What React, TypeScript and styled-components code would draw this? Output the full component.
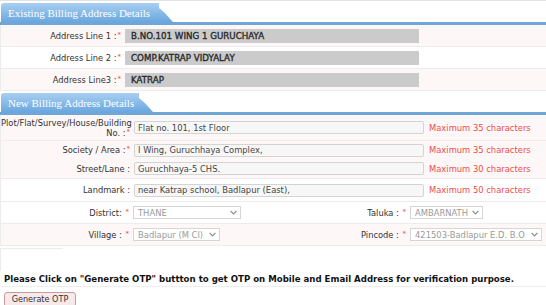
import * as React from "react";
import styled, {createGlobalStyle} from "styled-components";

const GlobalStyle = createGlobalStyle`
  html, body {
    margin: 0;
    padding: 0;
    background: #FFFFFF;
  }
  body {
    font-family: "DejaVu Sans", Verdana, sans-serif;
    color: #333;
  }
`;

const Page = styled.div`
  width: 546px;
  height: 305px;
  overflow: hidden;
  border-top: 1px solid #e2e2e2;
`;

const SectionHead = styled.div`
  margin-top: 2px;
  height: 19px;
  border-bottom: 3px solid #6ea6da;
  display: flex;
  align-items: flex-end;
`;

const Tab = styled.div<{ $width: number }>`
  position: relative;
  width: ${p => p.$width}px;
  height: 19px;
  margin-left: 1px;
  padding-left: 7px;
  box-sizing: border-box;
  display: flex;
  align-items: center;
  font-family: "Liberation Serif", "Times New Roman", serif;
  font-size: 11px;
  color: #ffffff;
  white-space: nowrap;
  background: linear-gradient(#a9cff1, #6aa7de);
  border-top-left-radius: 3px;

  &::after {
    content: "";
    position: absolute;
    top: 0;
    right: -14px;
    width: 26px;
    height: 19px;
    background: linear-gradient(#a9cff1, #6aa7de);
    border-top-right-radius: 10px;
    transform: skewX(42deg);
    transform-origin: bottom left;
  }

  span {
    position: relative;
    z-index: 1;
  }
`;

const Row = styled.div<{ $pink?: boolean; $labelWidth: number; $height: number; $open?: boolean }>`
  display: grid;
  grid-template-columns: ${p => p.$labelWidth}px 1fr;
  align-items: center;
  column-gap: 4px;
  height: ${p => p.$height}px;
  background: ${p => (p.$pink ? "#fdf7f7" : "#ffffff")};
  border-bottom: ${p => (p.$open ? "0" : "1px solid #ececec")};
  border-left: 1px solid #ececec;
  box-sizing: border-box;
`;

const QuadRow = styled(Row)`
  grid-template-columns: 128px 196px 73px 1fr;
`;

const Label = styled.div<{ $top?: boolean }>`
  text-align: right;
  font-size: 8.3px;
  line-height: 10px;
  color: #333;
  align-self: ${p => (p.$top ? "start" : "center")};
  padding-top: ${p => (p.$top ? "3px" : "0")};
  white-space: nowrap;
`;

const Req = styled.sup`
  color: #e24a4a;
  font-size: 7px;
  margin-left: 1px;
  vertical-align: 2px;
  line-height: 0;
`;

const Field = styled.div`
  display: flex;
  align-items: center;
  gap: 5px;
`;

const OldValue = styled.div`
  width: 294px;
  height: 14px;
  background: #cbcbcb;
  font-size: 8.7px;
  color: #2a2a2a;
  padding-left: 6px;
  box-sizing: border-box;
  display: flex;
  align-items: center;
  -webkit-text-stroke: 0.35px #2a2a2a;
`;

const TextBox = styled.input`
  width: 290px;
  height: 13px;
  box-sizing: border-box;
  border: 1px solid #d4d4d4;
  border-radius: 2px;
  background: #f7f7f7;
  font-family: "DejaVu Sans", Verdana, sans-serif;
  font-size: 8.4px;
  color: #444;
  padding: 0 3px;
  margin: 0;
  outline: none;
`;

const Hint = styled.span`
  color: #ef4b4b;
  font-size: 8.4px;
  white-space: nowrap;
`;

const Select = styled.div<{ $width: number }>`
  width: ${p => p.$width}px;
  height: 13px;
  box-sizing: border-box;
  border: 1px solid #d6d6d6;
  background: #ffffff;
  display: flex;
  align-items: center;
  justify-content: space-between;
  padding: 0 3px 0 4px;
  font-size: 8.4px;
  color: #9a9a9a;
  white-space: nowrap;
`;

const Chevron = () => (
  <svg width="7" height="5" viewBox="0 0 7 5">
    <path d="M0.6 0.8 L3.5 3.8 L6.4 0.8" fill="none" stroke="#8a8a8a" strokeWidth="1.2"/>
  </svg>
);

const Spacer = styled.div`
  height: 22px;
  margin-top: 2px;
  width: 62px;
  border-top: 1px solid #ececec;
  border-left: 1px solid #ececec;
`;

const Notice = styled.div`
  font-size: 8.6px;
  font-weight: bold;
  color: #111;
  padding: 3px 0 2px 4px;
  border-bottom: 1px solid #eeeeee;
  white-space: nowrap;
`;

const OtpButton = styled.button`
  margin: 2px 0 0 4px;
  width: 72px;
  height: 15px;
  padding: 0;
  font-family: "DejaVu Sans", Verdana, sans-serif;
  font-size: 8.1px;
  color: #333;
  background: #f7e9e9;
  border: 1px solid #c99a9a;
  border-radius: 3px;
  cursor: pointer;
`;

const existing = [
  {label: "Address Line 1 :", value: "B.NO.101 WING 1 GURUCHAYA"},
  {label: "Address Line 2 :", value: "COMP.KATRAP VIDYALAY"},
  {label: "Address Line3 :", value: "KATRAP"},
];

export default function App() {
  return (
    <Page>
      <GlobalStyle/>
      <SectionHead>
        <Tab $width={158}><span>Existing Billing Address Details</span></Tab>
      </SectionHead>
      {existing.map((item, i) => (
        <Row key={item.label} $pink={i % 2 === 0} $labelWidth={120} $height={22}>
          <Label>{item.label}<Req>*</Req></Label>
          <OldValue>{item.value}</OldValue>
        </Row>
      ))}

      <SectionHead>
        <Tab $width={138}><span>New Billing Address Details</span></Tab>
      </SectionHead>
      <Row $pink $labelWidth={129} $height={26}>
        <Label $top>Plot/Flat/Survey/House/Building<br/>No. :<Req>*</Req></Label>
        <Field>
          <TextBox readOnly value="Flat no. 101, 1st Floor"/>
          <Hint>Maximum 35 characters</Hint>
        </Field>
      </Row>
      <Row $pink $open $labelWidth={129} $height={18}>
        <Label>Society / Area :<Req>*</Req></Label>
        <Field>
          <TextBox readOnly value="I Wing, Guruchhaya Complex,"/>
          <Hint>Maximum 35 characters</Hint>
        </Field>
      </Row>
      <Row $pink $labelWidth={129} $height={20}>
        <Label>Street/Lane :</Label>
        <Field>
          <TextBox readOnly value="Guruchhaya-5 CHS."/>
          <Hint>Maximum 30 characters</Hint>
        </Field>
      </Row>
      <Row $labelWidth={129} $height={23}>
        <Label>Landmark :</Label>
        <Field>
          <TextBox readOnly value="near Katrap school, Badlapur (East),"/>
          <Hint>Maximum 50 characters</Hint>
        </Field>
      </Row>
      <QuadRow $labelWidth={129} $height={22}>
        <Label>District: <Req>*</Req></Label>
        <Select $width={108}>THANE<Chevron/></Select>
        <Label>Taluka : <Req>*</Req></Label>
        <Select $width={73}>AMBARNATH<Chevron/></Select>
      </QuadRow>
      <QuadRow $pink $labelWidth={129} $height={22}>
        <Label>Village : <Req>*</Req></Label>
        <Select $width={87}>Badlapur (M Cl)<Chevron/></Select>
        <Label>Pincode : <Req>*</Req></Label>
        <Select $width={132}>421503-Badlapur E.D. B.O<Chevron/></Select>
      </QuadRow>

      <Spacer/>
      <Notice>Please Click on "Generate OTP" buttton to get OTP on Mobile and Email Address for verification purpose.</Notice>
      <OtpButton>Generate OTP</OtpButton>
    </Page>
  );
}
